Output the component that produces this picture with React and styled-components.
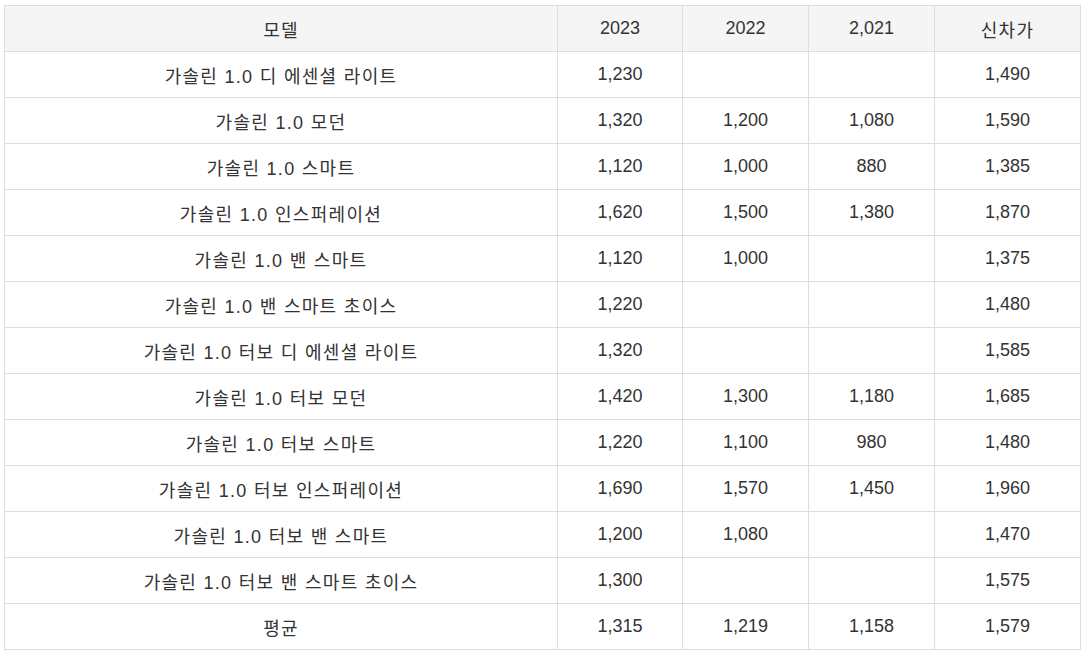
import styled, { createGlobalStyle } from 'styled-components';

const GlobalStyle = createGlobalStyle`
  body {
    margin: 0;
    padding: 5px 4px;
    background: #fff;
    font-family: "Liberation Sans", Arial, "Noto Sans CJK KR", sans-serif;
    color: #333;
  }
`;

const Table = styled.table`
  width: 1076px;
  border-collapse: collapse;
  table-layout: fixed;
  font-size: 18px;
`;

const Head = styled.th`
  height: 45px;
  padding: 0 8px;
  background: #f5f5f5;
  border: 1px solid #ddd;
  font-weight: normal;
  text-align: center;
  color: #333;
  letter-spacing: ${p => (p.$wide ? '1.3px' : '0')};
`;

const Cell = styled.td`
  height: 45px;
  padding: 0 8px;
  border: 1px solid #ddd;
  text-align: center;
  white-space: nowrap;
  letter-spacing: ${p => (p.$wide ? '1.3px' : '0')};
`;

const columns = [
  { label: '모델', width: 553, wide: true },
  { label: '2023', width: 125 },
  { label: '2022', width: 126 },
  { label: '2,021', width: 126 },
  { label: '신차가', width: 146, wide: true },
];

const rows = [
  ['가솔린 1.0 디 에센셜 라이트', '1,230', '', '', '1,490'],
  ['가솔린 1.0 모던', '1,320', '1,200', '1,080', '1,590'],
  ['가솔린 1.0 스마트', '1,120', '1,000', '880', '1,385'],
  ['가솔린 1.0 인스퍼레이션', '1,620', '1,500', '1,380', '1,870'],
  ['가솔린 1.0 밴 스마트', '1,120', '1,000', '', '1,375'],
  ['가솔린 1.0 밴 스마트 초이스', '1,220', '', '', '1,480'],
  ['가솔린 1.0 터보 디 에센셜 라이트', '1,320', '', '', '1,585'],
  ['가솔린 1.0 터보 모던', '1,420', '1,300', '1,180', '1,685'],
  ['가솔린 1.0 터보 스마트', '1,220', '1,100', '980', '1,480'],
  ['가솔린 1.0 터보 인스퍼레이션', '1,690', '1,570', '1,450', '1,960'],
  ['가솔린 1.0 터보 밴 스마트', '1,200', '1,080', '', '1,470'],
  ['가솔린 1.0 터보 밴 스마트 초이스', '1,300', '', '', '1,575'],
  ['평균', '1,315', '1,219', '1,158', '1,579'],
];

export default function App() {
  return (
    <>
      <GlobalStyle />
      <Table>
        <colgroup>
          {columns.map(c => (
            <col key={c.label} style={{ width: c.width }} />
          ))}
        </colgroup>
        <thead>
          <tr>
            {columns.map(c => (
              <Head key={c.label} $wide={c.wide}>
                {c.label}
              </Head>
            ))}
          </tr>
        </thead>
        <tbody>
          {rows.map(r => (
            <tr key={r[0]}>
              {r.map((v, i) => (
                <Cell key={i} $wide={i === 0}>
                  {v}
                </Cell>
              ))}
            </tr>
          ))}
        </tbody>
      </Table>
    </>
  );
}
